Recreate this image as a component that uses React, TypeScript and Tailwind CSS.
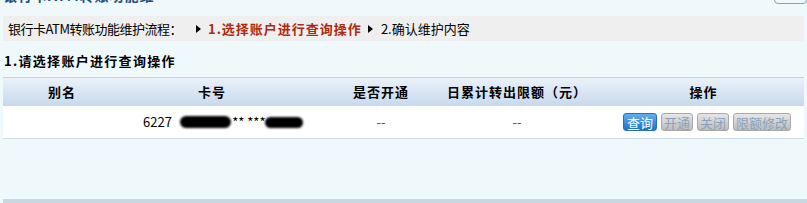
import React from "react";

const font = { fontFamily: '"Noto Sans CJK SC", "Liberation Sans", sans-serif' };

function Btn({ label, active }: { label: string; active?: boolean }) {
  return (
    <span
      className={
        active
          ? "inline-flex h-[18px] items-center rounded-[3px] border border-[#2a6fb8] bg-gradient-to-b from-[#62aeee] to-[#1f72c6] px-[3px] text-[13px] leading-none text-white"
          : "inline-flex h-[18px] items-center rounded-[3px] border border-[#a8a8a8] bg-gradient-to-b from-[#e6e6e6] to-[#bcbcbc] px-[2px] text-[13px] leading-none text-[#8aa2ba]"
      }
    >
      {label}
    </span>
  );
}

function Tri() {
  return <span className="inline-block h-0 w-0 border-y-[4px] border-l-[5px] border-y-transparent border-l-black" />;
}

export default function App() {
  return (
    <div className="relative h-[203px] w-[807px] overflow-hidden bg-[#eff8fa] text-[13px] text-black" style={font}>
      {/* cut-off title */}
      <div className="flex h-[16px] items-start justify-between">
        <div className="ml-[3px] h-[3px] overflow-hidden">
          <div className="-mt-[13px] text-[14px] font-bold leading-[16px] tracking-[1px] text-[#1f4f80]">银行卡ATM转账功能维</div>
        </div>
        <div className="-mt-[6px] h-[10px] w-[33px] rounded-[4px] border border-[#8aa0b8]" />
      </div>
      {/* breadcrumb */}
      <div className="mx-[3px] flex h-[25px] items-center bg-[#efefef] pl-[5px]">
        <span className="tracking-[-0.5px]">银行卡ATM转账功能维护流程：</span>
        <span className="ml-[14px] flex items-center"><Tri /></span>
        <span className="ml-[7px] font-bold tracking-[1px] text-[#ad2a12]">1.选择账户进行查询操作</span>
        <span className="ml-[6px] flex items-center"><Tri /></span>
        <span className="ml-[8px]">2.确认维护内容</span>
      </div>
      {/* section title */}
      <div className="ml-[4px] mt-[12px] h-[16px] text-[13px] font-bold leading-[16px] tracking-[1.3px]">1.请选择账户进行查询操作</div>
      {/* table */}
      <div className="mx-[3px] mt-[8px] border-b border-[#cfdde8]">
        <div className="flex h-[29px] items-center border-t border-[#c4d4e4] bg-gradient-to-b from-[#eaf1fa] to-[#c8d9ee] text-[13px] font-bold tracking-[1px]">
          <div className="flex w-[118px] justify-center whitespace-nowrap">别名</div>
          <div className="flex w-[182px] justify-center whitespace-nowrap">卡号</div>
          <div className="flex w-[156px] justify-center whitespace-nowrap">是否开通</div>
          <div className="flex w-[116px] justify-center whitespace-nowrap">日累计转出限额（元）</div>
          <div className="flex flex-1 justify-center whitespace-nowrap pl-[28px]">操作</div>
        </div>
        <div className="flex h-[32px] items-center bg-white">
          <div className="w-[118px]" />
          <div className="flex w-[182px] items-center pl-[22px] whitespace-nowrap">
            <span>6227</span>
            <span className="ml-[8px] inline-block h-[12px] w-[52px] rounded-full bg-black blur-[1px]" />
            <span className="ml-[1px]">** ***</span>
            <span className="inline-block h-[11px] w-[38px] rounded-full bg-black blur-[1px]" />
          </div>
          <div className="flex w-[156px] justify-center text-[#555]">--</div>
          <div className="flex w-[116px] justify-center text-[#555]">--</div>
          <div className="flex flex-1 items-center justify-end gap-[4px] pr-[13px]">
            <Btn label="查询" active />
            <Btn label="开通" />
            <Btn label="关闭" />
            <Btn label="限额修改" />
          </div>
        </div>
      </div>
      <div className="absolute bottom-0 left-[3px] right-0 h-[4px] bg-[#c9d7e0]" />
    </div>
  );
}
